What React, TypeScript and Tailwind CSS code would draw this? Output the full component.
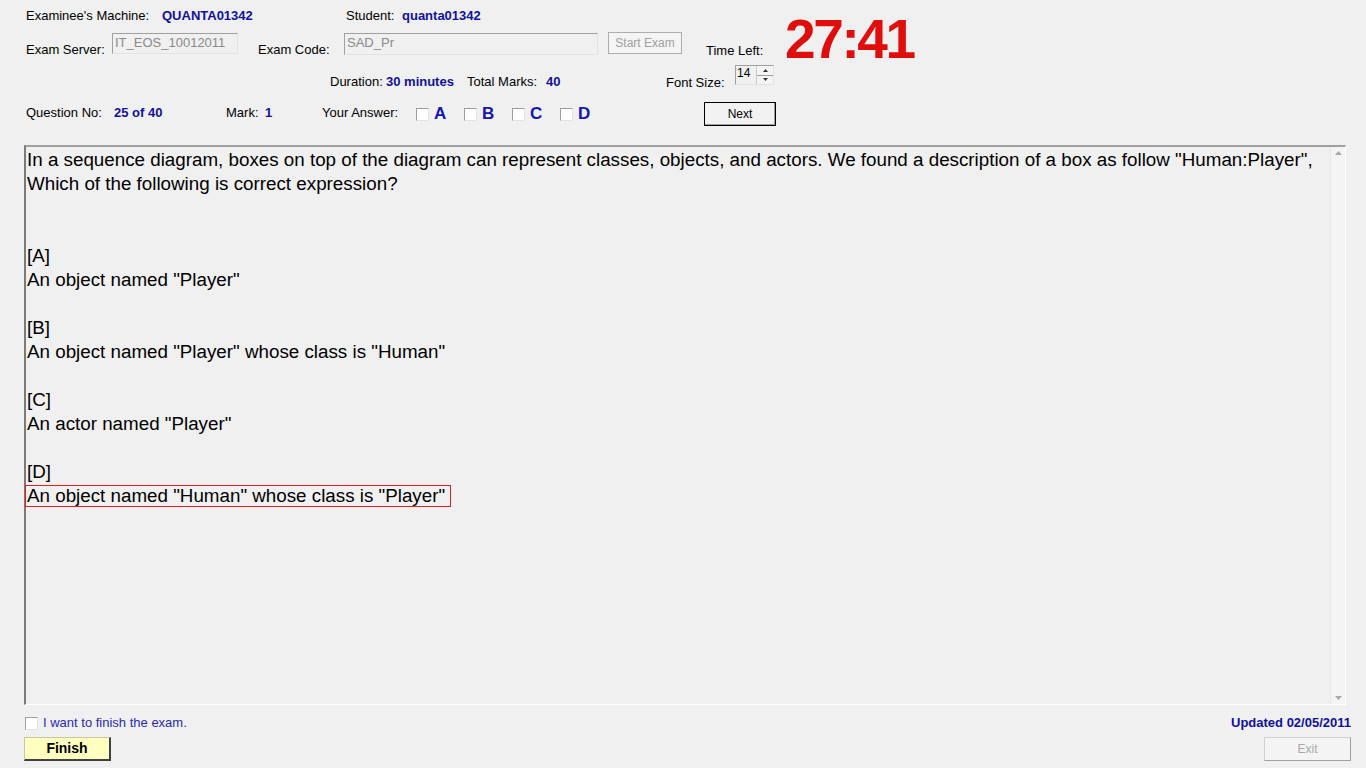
import React from "react";

const blue = "text-[#10109c]";

function Check({ className = "" }: { className?: string }) {
  return (
    <span
      className={
        "inline-block shrink-0 w-[13px] h-[13px] bg-white border border-t-[#a0a0a0] border-l-[#a0a0a0] border-r-[#e3e3e3] border-b-[#e3e3e3] " +
        className
      }
    />
  );
}

function AnswerBox({ letter }: { letter: string }) {
  return (
    <div className="flex items-center w-[48px] shrink-0">
      <Check className="mt-[1px]" />
      <span className="ml-[5px] text-[17px] font-bold text-[#1515b0]">{letter}</span>
    </div>
  );
}

export default function App() {
  return (
    <div
      className="w-[1366px] h-[768px] bg-[#f0f0f0] text-[13px] text-black overflow-hidden flex flex-col"
      style={{ fontFamily: '"Liberation Sans", Arial, sans-serif' }}
    >
      {/* header */}
      <div className="flex h-[145px]">
        <div className="w-[785px] shrink-0 flex flex-col">
          {/* row 1 */}
          <div className="flex items-center h-[20px] mt-[6px] pl-[26px]">
            <span className="w-[136px] shrink-0">Examinee's Machine:</span>
            <span className={"w-[184px] shrink-0 font-bold " + blue}>QUANTA01342</span>
            <span className="w-[56px] shrink-0">Student:</span>
            <span className={"font-bold " + blue}>quanta01342</span>
          </div>
          {/* row 2 */}
          <div className="flex items-start h-[26px] mt-[6px] pl-[26px]">
            <span className="w-[86px] shrink-0 mt-[8px]">Exam Server:</span>
            <div className="w-[126px] shrink-0 h-[21px] mt-[1px] border border-t-[#a0a0a0] border-l-[#a0a0a0] border-r-[#e3e3e3] border-b-[#e3e3e3] text-[#8a8a8a] pl-[2px] leading-[18px]">
              IT_EOS_10012011
            </div>
            <span className="w-[86px] shrink-0 ml-[20px] mt-[8px]">Exam Code:</span>
            <div className="w-[254px] shrink-0 h-[22px] mt-[1px] border border-t-[#a0a0a0] border-l-[#a0a0a0] border-r-[#e3e3e3] border-b-[#e3e3e3] text-[#8a8a8a] pl-[2px] leading-[18px]">
              SAD_Pr
            </div>
            <div className="w-[74px] shrink-0 h-[22px] ml-[10px] border border-[#adadad] bg-[#f4f4f4] text-[#a0a0a0] text-[12px] flex items-center justify-center">
              Start Exam
            </div>
            <span className="ml-[24px] mt-[9px] whitespace-nowrap">Time Left:</span>
          </div>
          {/* row 3 */}
          <div className="flex items-start h-[26px] mt-[4px] pl-[330px]">
            <span className="w-[56px] shrink-0 mt-[10px]">Duration:</span>
            <span className={"w-[81px] shrink-0 mt-[10px] font-bold " + blue}>30 minutes</span>
            <span className="w-[79px] shrink-0 mt-[10px]">Total Marks:</span>
            <span className={"w-[120px] shrink-0 mt-[10px] font-bold " + blue}>40</span>
            <span className="w-[69px] shrink-0 mt-[11px]">Font Size:</span>
            <div className="w-[39px] shrink-0 h-[20px] mt-[3px] flex border border-t-[#a0a0a0] border-l-[#a0a0a0] border-r-[#e3e3e3] border-b-[#e3e3e3] bg-[#f0f0f0]">
              <span className="flex-1 text-[12px] leading-[14px] pl-[1px]">14</span>
              <div className="w-[17px] flex flex-col border-l border-[#c8c8c8]">
                <div className="flex-1 flex items-center justify-center border-b border-[#a0a0a0] bg-[#f4f4f4]">
                  <svg width="5" height="3" viewBox="0 0 5 3"><path d="M0 3 L2.5 0 L5 3 Z" fill="#333" /></svg>
                </div>
                <div className="flex-1 flex items-center justify-center bg-[#f4f4f4]">
                  <svg width="5" height="3" viewBox="0 0 5 3"><path d="M0 0 L2.5 3 L5 0 Z" fill="#333" /></svg>
                </div>
              </div>
            </div>
          </div>
          {/* row 4 */}
          <div className="flex items-center h-[26px] mt-[13px] pl-[26px]">
            <span className="w-[88px] shrink-0 -mt-[3px]">Question No:</span>
            <span className={"w-[112px] shrink-0 -mt-[3px] font-bold " + blue}>25 of 40</span>
            <span className="w-[39px] shrink-0 -mt-[3px]">Mark:</span>
            <span className={"w-[57px] shrink-0 -mt-[3px] font-bold " + blue}>1</span>
            <span className="w-[94px] shrink-0 -mt-[3px]">Your Answer:</span>
            <AnswerBox letter="A" />
            <AnswerBox letter="B" />
            <AnswerBox letter="C" />
            <AnswerBox letter="D" />
            <div className="ml-[96px] shrink-0 w-[72px] h-[24px] border border-black bg-[#f2f2f2] shadow-[inset_-1px_-1px_0_#a0a0a0] text-[12px] flex items-center justify-center">
              Next
            </div>
          </div>
        </div>
        <div className="text-[#e00d0d] font-bold text-[55px] leading-none tracking-[-2.4px] mt-[12px]">
          27:41
        </div>
      </div>

      {/* question area */}
      <div className="ml-[24px] w-[1322px] h-[560px] border-t-2 border-l-2 border-t-[#a0a0a0] border-l-[#7a7a7a] border-b border-r border-b-[#ffffff] border-r-[#ffffff] flex">
        <div className="flex-1 pl-[1px] pt-[1px] text-[18.8px] leading-[24px] whitespace-nowrap">
          <div>
            In a sequence diagram, boxes on top of the diagram can represent classes, objects, and actors. We found a description of a box as follow "Human:Player",
          </div>
          <div>Which of the following is correct expression?</div>
          <div className="h-[24px]" />
          <div className="h-[24px]" />
          <div>[A]</div>
          <div>An object named "Player"</div>
          <div className="h-[24px]" />
          <div>[B]</div>
          <div>An object named "Player" whose class is "Human"</div>
          <div className="h-[24px]" />
          <div>[C]</div>
          <div>An actor named "Player"</div>
          <div className="h-[24px]" />
          <div>[D]</div>
          <div>
            <span className="inline-block -ml-[2px] pl-[1px] pr-[5px] border border-[#e02020] leading-[20px]">
              An object named "Human" whose class is "Player"
            </span>
          </div>
        </div>
        <div className="w-[15px] flex flex-col justify-between items-center bg-[#f4f4f4] border-l border-[#e8e8e8] py-[4px]">
          <svg width="7" height="4" viewBox="0 0 7 4"><path d="M0 4 L3.5 0 L7 4 Z" fill="#a8a8a8" /></svg>
          <svg width="7" height="4" viewBox="0 0 7 4"><path d="M0 0 L3.5 4 L7 0 Z" fill="#a8a8a8" /></svg>
        </div>
      </div>

      {/* footer */}
      <div className="flex items-center justify-between h-[20px] mt-[8px] pl-[25px] pr-[15px]">
        <div className="flex items-center">
          <Check />
          <span className="ml-[5px] text-[#2a2ab0]">I want to finish the exam.</span>
        </div>
        <span className={"font-bold " + blue}>Updated 02/05/2011</span>
      </div>
      <div className="flex justify-between mt-[4px] pl-[24px] pr-[15px]">
        <div className="w-[87px] h-[24px] bg-[#ffffc0] border border-[#c8c8a0] border-r-2 border-b-2 border-r-[#404040] border-b-[#404040] font-bold text-[14px] flex items-center justify-center">
          Finish
        </div>
        <div className="w-[87px] h-[24px] bg-[#f4f4f4] border border-[#d0d0d0] border-r-[#a0a0a0] border-b-[#a0a0a0] text-[#a8a8a8] text-[12px] flex items-center justify-center">
          Exit
        </div>
      </div>
    </div>
  );
}
